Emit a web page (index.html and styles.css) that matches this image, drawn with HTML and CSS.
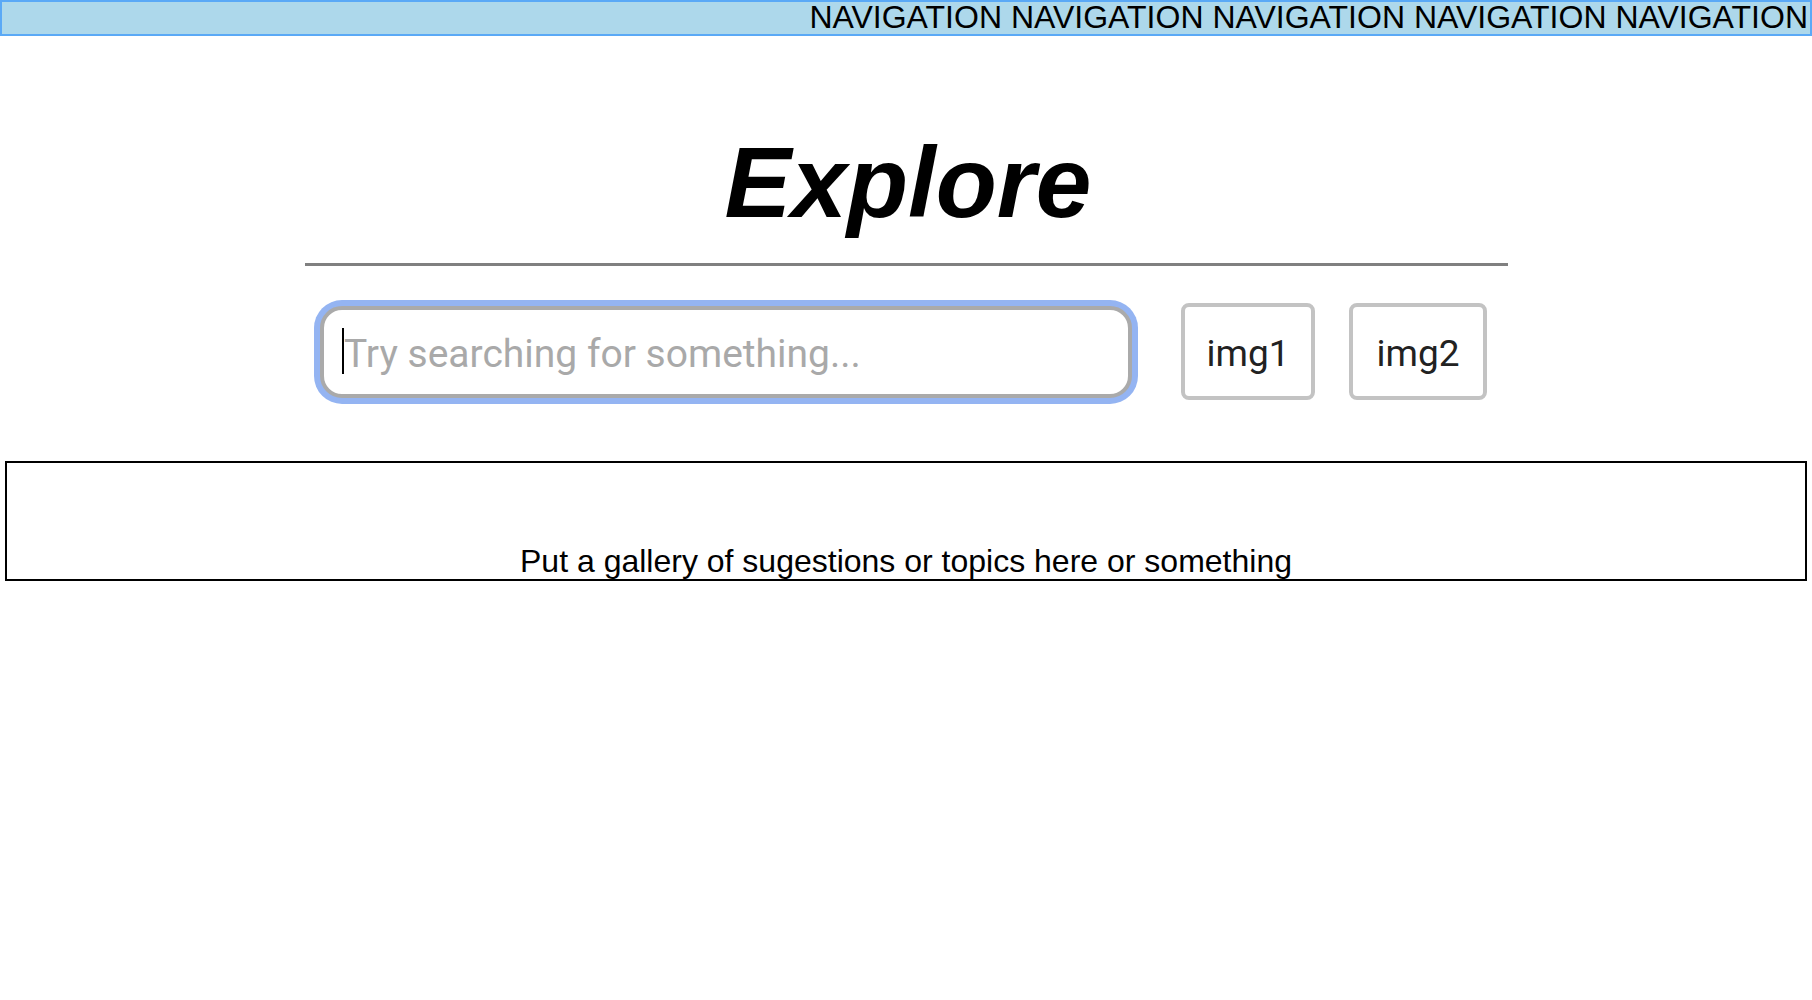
FILE: index.html
```html
<!DOCTYPE html>
<html>
<head>
<meta charset="utf-8">
<title>Explore</title>
<link rel="stylesheet" href="styles.css">
</head>
<body>
<nav class="nav">NAVIGATION NAVIGATION NAVIGATION NAVIGATION NAVIGATION</nav>
<main class="main">
  <h1 class="title">Explore</h1>
  <hr class="rule">
  <div class="search-row">
    <div class="search-box">
      <span class="caret"></span>
      <input class="search-input" type="text" placeholder="Try searching for something...">
    </div>
    <button class="img-btn img-btn-1">img1</button>
    <button class="img-btn img-btn-2">img2</button>
  </div>
  <section class="gallery">Put a gallery of sugestions or topics here or something</section>
</main>
</body>
</html>
```
FILE: styles.css
```css
html, body {
  margin: 0;
  padding: 0;
  background: #fff;
}
body {
  font-family: "Liberation Sans", Arial, sans-serif;
  color: #000;
}
.nav {
  box-sizing: border-box;
  height: 36px;
  background: #add8eb;
  border: 2px solid #5aa9f6;
  text-align: right;
  font-size: 32px;
  line-height: 30px;
  padding-right: 2px;
  white-space: nowrap;
}
.title {
  margin: 89px 0 0;
  padding-left: 4px;
  font-size: 100px;
  line-height: 115px;
  font-weight: bold;
  font-style: italic;
  text-align: center;
}
.rule {
  width: 1203px;
  margin: 23px auto 0;
  border: 0;
  height: 3px;
  background: #808080;
  padding-left: 3px;
  box-sizing: border-box;
}
.search-row {
  display: flex;
  align-items: center;
  width: 1167px;
  margin: 37px auto 0;
  padding-right: 5px;
  box-sizing: content-box;
}
.search-box {
  position: relative;
  box-sizing: border-box;
  width: 812px;
  height: 92px;
  border: 4px solid #aaaaaa;
  border-radius: 22px;
  box-shadow: 0 0 0 6px #94b4f2;
  background: #fff;
  display: flex;
  align-items: center;
}
.caret {
  position: absolute;
  left: 18px;
  top: 18px;
  width: 2px;
  height: 46px;
  background: #000;
}
.search-input {
  border: 0;
  outline: none;
  background: transparent;
  width: 100%;
  padding: 4px 0 0 20px;
  font-family: Roboto, "Noto Sans", sans-serif;
  font-size: 39px;
  color: #222;
}
.search-input::placeholder {
  color: #a9a9a9;
}
.img-btn {
  box-sizing: border-box;
  height: 97px;
  background: #fff;
  border: 4px solid #c3c3c3;
  border-radius: 8px;
  font-family: Roboto, "Noto Sans", sans-serif;
  font-size: 37px;
  color: #222;
  padding: 4px 0 0;
}
.img-btn-1 {
  width: 134px;
  margin-left: 49px;
}
.img-btn-2 {
  width: 138px;
  margin-left: 34px;
}
.gallery {
  box-sizing: border-box;
  margin: 61px 5px 0;
  height: 120px;
  border: 2px solid #000;
  padding-top: 80px;
  font-size: 32px;
  line-height: 36px;
  text-align: center;
}
```
